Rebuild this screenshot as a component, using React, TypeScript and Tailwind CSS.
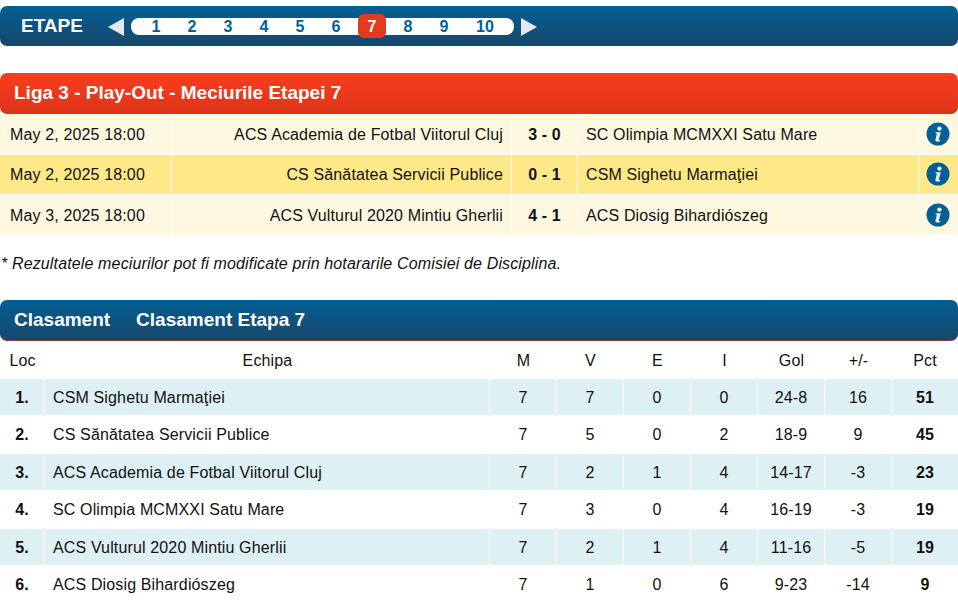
const MATCHES = [
  { date: 'May 2, 2025 18:00', home: 'ACS Academia de Fotbal Viitorul Cluj', score: '3 - 0', away: 'SC Olimpia MCMXXI Satu Mare', hi: false },
  { date: 'May 2, 2025 18:00', home: 'CS Sănătatea Servicii Publice', score: '0 - 1', away: 'CSM Sighetu Marmaţiei', hi: true },
  { date: 'May 3, 2025 18:00', home: 'ACS Vulturul 2020 Mintiu Gherlii', score: '4 - 1', away: 'ACS Diosig Bihardiószeg', hi: false },
];

const TEAMS = [
  ['1.', 'CSM Sighetu Marmaţiei', '7', '7', '0', '0', '24-8', '16', '51'],
  ['2.', 'CS Sănătatea Servicii Publice', '7', '5', '0', '2', '18-9', '9', '45'],
  ['3.', 'ACS Academia de Fotbal Viitorul Cluj', '7', '2', '1', '4', '14-17', '-3', '23'],
  ['4.', 'SC Olimpia MCMXXI Satu Mare', '7', '3', '0', '4', '16-19', '-3', '19'],
  ['5.', 'ACS Vulturul 2020 Mintiu Gherlii', '7', '2', '1', '4', '11-16', '-5', '19'],
  ['6.', 'ACS Diosig Bihardiószeg', '7', '1', '0', '6', '9-23', '-14', '9'],
];

const ROUNDS = ['1', '2', '3', '4', '5', '6', '7', '8', '9', '10'];
const BLUE = 'bg-gradient-to-b from-[#005f93] to-[#15476b]';

function InfoIcon() {
  return (
    <svg width="24" height="24" viewBox="0 0 24 24" className="block">
      <circle cx="12" cy="12" r="11.5" fill="#035f94" />
      <circle cx="13.4" cy="6.6" r="2.2" fill="#e8f1f6" />
      <path d="M9.6 10.2h5.2l-2 7.4c-.1.5.3.6 1.5.2l-.2 1.2c-1.2.7-5.2 1.2-4.7-1.2l1.4-5.8c.1-.6-.4-.7-1.4-.7z" fill="#e8f1f6" />
    </svg>
  );
}

export default function App() {
  return (
    <div className="w-[958px] h-[604px] overflow-hidden bg-white pt-[6px] font-['Liberation_Sans',Arial,sans-serif] text-[16px] tracking-[0.14px] text-[#111]">
      <div className={`h-[40px] rounded-[7px] ${BLUE} flex items-center pl-[21px] text-white tracking-normal`}>
        <span className="w-[87px] text-[19px] font-bold">ETAPE</span>
        <span className="mt-[2px] w-0 h-0 border-y-[9px] border-y-transparent border-r-[16px] border-r-[#e3e9ee]" />
        <div className="ml-[7px] pl-[7px] w-[383px] h-[17px] bg-white rounded-[8px] flex items-center">
          {ROUNDS.map((r) => (
            <span key={r} className={r === '7'
              ? 'w-[28px] mx-[4px] h-[24px] -my-[4px] rounded-[6px] bg-[#e23a1e] text-white font-bold text-center leading-[26px]'
              : r === '10'
                ? 'w-[46px] text-[#005f93] font-bold text-center leading-[18px] mt-[2px]'
                : 'w-[36px] text-[#005f93] font-bold text-center leading-[18px] mt-[2px]'}>
              {r}
            </span>
          ))}
        </div>
        <span className="ml-[7px] mt-[2px] w-0 h-0 border-y-[9px] border-y-transparent border-l-[16px] border-l-[#e3e9ee]" />
      </div>

      <div className="mt-[27px] h-[41px] rounded-[7px] bg-gradient-to-b from-[#fd3d20] to-[#da3418] text-white text-[19px] tracking-normal font-bold flex items-center pl-[14px]">
        Liga 3 - Play-Out - Meciurile Etapei 7
      </div>

      <table className="w-[958px] table-fixed border-separate border-spacing-0">
        <colgroup>
          <col className="w-[172px]" />
          <col className="w-[340px]" />
          <col className="w-[66px]" />
          <col className="w-[341px]" />
          <col className="w-[39px]" />
        </colgroup>
        <tbody>
          {MATCHES.map((m) => (
            <tr key={m.home} className={`h-[40.5px] ${m.hi ? 'bg-[#fee888]' : 'bg-[#fef8e0]'}`}>
              <td className="pl-[10px] pt-[2px] border-r border-b border-white">{m.date}</td>
              <td className="pr-[8px] pt-[2px] text-right border-r border-b border-white">{m.home}</td>
              <td className="pt-[2px] text-center font-bold border-r border-b border-white">{m.score}</td>
              <td className="pl-[8px] pt-[2px] border-r border-b border-white">{m.away}</td>
              <td className="pl-[7px] border-b border-white"><InfoIcon /></td>
            </tr>
          ))}
        </tbody>
      </table>

      <p className="mt-[19px] pl-[1px] italic leading-[18px]">* Rezultatele meciurilor pot fi modificate prin hotararile Comisiei de Disciplina.</p>

      <div className={`mt-[27px] h-[41px] rounded-[7px] ${BLUE} border-b border-[#8c3a42] text-white text-[19px] tracking-normal font-bold flex items-center gap-[26px] pl-[14px] pt-[1px]`}>
        <span>Clasament</span>
        <span>Clasament Etapa 7</span>
      </div>

      <table className="w-[958px] table-fixed border-separate border-spacing-0">
        <colgroup>
          <col className="w-[45px]" />
          <col className="w-[445px]" />
          <col className="w-[67px]" />
          <col className="w-[67px]" />
          <col className="w-[67px]" />
          <col className="w-[67px]" />
          <col className="w-[67px]" />
          <col className="w-[67px]" />
          <col className="w-[66px]" />
        </colgroup>
        <thead>
          <tr className="h-[38px] text-center">
            {['Loc', 'Echipa', 'M', 'V', 'E', 'I', 'Gol', '+/-', 'Pct'].map((h) => (
              <th key={h} className="font-normal pt-[2px]">{h}</th>
            ))}
          </tr>
        </thead>
        <tbody>
          {TEAMS.map((t, i) => (
            <tr key={t[0]} className={`h-[37.5px] ${i % 2 === 0 ? 'bg-[#ddf0f3]' : 'bg-white'}`}>
              {t.map((v, j) => (
                <td key={j} className={`pt-[2px] border-b border-white ${j < 8 ? 'border-r' : ''} ${j === 1 ? 'pl-[8px] text-left' : 'text-center'} ${j === 0 || j === 8 ? 'font-bold' : ''}`}>
                  {v}
                </td>
              ))}
            </tr>
          ))}
        </tbody>
      </table>
    </div>
  );
}
